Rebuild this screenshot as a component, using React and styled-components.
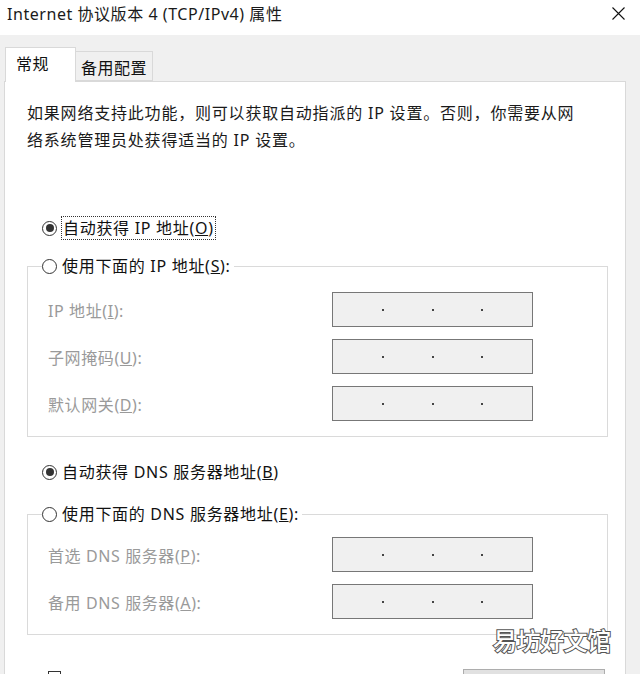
import React from "react";
import styled, { createGlobalStyle } from "styled-components";

const GlobalStyle = createGlobalStyle`
  html, body, #root {
    margin: 0;
    width: 640px;
    height: 674px;
    overflow: hidden;
  }
  body {
    background: #f0f0f0;
    font-family: "Noto Sans", "Noto Sans CJK SC", sans-serif;
    color: #1a1a1a;
  }
`;

const ipRows = [
  { label: "IP 地址", key: "I" },
  { label: "子网掩码", key: "U" },
  { label: "默认网关", key: "D" },
];

const dnsRows = [
  { label: "首选 DNS 服务器", key: "P" },
  { label: "备用 DNS 服务器", key: "A" },
];

const Radio = ({ checked }) => (
  <RadioCircle>{checked && <RadioDot />}</RadioCircle>
);

const IpBox = () => (
  <IpInput>
    <Octet />
    <Dot />
    <Octet />
    <Dot />
    <Octet />
    <Dot />
    <Octet />
  </IpInput>
);

const Fields = ({ rows, top }) => (
  <FieldGrid $top={top}>
    {rows.map((r) => (
      <React.Fragment key={r.key}>
        <FieldLabel>
          {r.label}(<u>{r.key}</u>):
        </FieldLabel>
        <IpBox />
      </React.Fragment>
    ))}
  </FieldGrid>
);

const App = () => {
  return (
    <Window>
      <GlobalStyle />
      <TitleBar>
        <Title>Internet 协议版本 4 (TCP/IPv4) 属性</Title>
        <CloseIcon viewBox="0 0 13 13">
          <path d="M0.5 0.5 L12.5 12.5 M12.5 0.5 L0.5 12.5" stroke="#111" strokeWidth="1.1" />
        </CloseIcon>
      </TitleBar>

      <Body>
        <Tabs>
          <Tab $active>常规</Tab>
          <Tab>备用配置</Tab>
        </Tabs>

        <Panel>
          <Intro>
            如果网络支持此功能，则可以获取自动指派的 IP 设置。否则，你需要从网
            <br />
            络系统管理员处获得适当的 IP 设置。
          </Intro>

          <RadioRow $top={62}>
            <Radio checked />
            <RadioText $focused>
              自动获得 IP 地址(<u>O</u>)
            </RadioText>
          </RadioRow>

          <Group $top={14}>
            <Legend>
              <RadioRow>
                <Radio />
                <RadioText>
                  使用下面的 IP 地址(<u>S</u>):
                </RadioText>
              </RadioRow>
            </Legend>
            <Fields rows={ipRows} top={14} />
          </Group>

          <RadioRow $top={23}>
            <Radio checked />
            <RadioText>
              自动获得 DNS 服务器地址(<u>B</u>)
            </RadioText>
          </RadioRow>

          <Group $top={18}>
            <Legend>
              <RadioRow>
                <Radio />
                <RadioText>
                  使用下面的 DNS 服务器地址(<u>E</u>):
                </RadioText>
              </RadioRow>
            </Legend>
            <Fields rows={dnsRows} top={11} />
          </Group>

          <BottomRow>
            <CheckLabel>
              <CheckBox />
              退出时验证设置(<u>L</u>)
            </CheckLabel>
            <Button>高级(<u>V</u>)...</Button>
          </BottomRow>
        </Panel>
      </Body>

      <Watermark>易坊好文馆</Watermark>
    </Window>
  );
};

export default App;

const Window = styled.div`
  position: relative;
  width: 640px;
  height: 674px;
  overflow: hidden;
  background: #f0f0f0;
`;

const TitleBar = styled.div`
  display: flex;
  justify-content: space-between;
  align-items: flex-start;
  height: 35px;
  padding: 0 15px 0 7px;
  box-sizing: border-box;
  background: #ffffff;
`;

const Title = styled.div`
  padding-top: 3px;
  font-size: 16px;
  line-height: 22px;
  letter-spacing: 0.55px;
  color: #1a1a1a;
  white-space: nowrap;
`;

const CloseIcon = styled.svg`
  width: 13px;
  height: 13px;
  margin-top: 7px;
`;

const Body = styled.div`
  padding: 12px 0 0 4px;
`;

const Tabs = styled.div`
  display: flex;
  align-items: flex-end;
  padding-left: 1px;
`;

const Tab = styled.div`
  position: relative;
  box-sizing: border-box;
  width: ${(p) => (p.$active ? "71px" : "77px")};
  height: ${(p) => (p.$active ? "35px" : "30px")};
  margin-bottom: ${(p) => (p.$active ? "-1px" : "0")};
  padding: 5px 0 0 ${(p) => (p.$active ? "10px" : "5px")};
  font-size: 16px;
  line-height: 22px;
  letter-spacing: 0.5px;
  background: ${(p) => (p.$active ? "#ffffff" : "#f0f0f0")};
  border: 1px solid #d9d9d9;
  border-bottom: ${(p) => (p.$active ? "none" : "1px solid #d9d9d9")};
  border-left: ${(p) => (p.$active ? "1px solid #d9d9d9" : "none")};
  z-index: ${(p) => (p.$active ? 2 : 1)};
  color: #111;
`;

const Panel = styled.div`
  box-sizing: border-box;
  width: 622px;
  height: 700px;
  padding: 18px 17px 0 22px;
  background: #ffffff;
  border: 1px solid #d9d9d9;
`;

const Intro = styled.p`
  margin: 0;
  font-size: 16px;
  line-height: 27px;
  letter-spacing: 0.8px;
  white-space: nowrap;
  color: #1a1a1a;
`;

const RadioRow = styled.div`
  display: flex;
  align-items: center;
  height: 24px;
  margin-top: ${(p) => p.$top || 0}px;
  padding-left: ${(p) => (p.$top ? "15px" : "0")};
`;

const RadioCircle = styled.span`
  display: flex;
  align-items: center;
  justify-content: center;
  box-sizing: border-box;
  width: 15px;
  height: 15px;
  border: 1px solid #333;
  border-radius: 50%;
  background: #fff;
  flex-shrink: 0;
`;

const RadioDot = styled.span`
  width: 8px;
  height: 8px;
  border-radius: 50%;
  background: #333;
`;

const RadioText = styled.span`
  margin-left: ${(p) => (p.$focused ? "4px" : "5px")};
  padding: 0 ${(p) => (p.$focused ? "1px" : "0")};
  font-size: 16px;
  line-height: 22px;
  letter-spacing: 0.7px;
  color: #111;
  white-space: nowrap;
  border: ${(p) => (p.$focused ? "1px dotted #333" : "none")};
`;

const Group = styled.fieldset`
  margin: ${(p) => p.$top}px 0 0 0;
  padding: 0 0 15px 20px;
  border: 1px solid #dadada;
  min-inline-size: 0;
`;

const Legend = styled.legend`
  margin-left: -6px;
  padding: 0 3px 0 0;
`;

const FieldGrid = styled.div`
  display: grid;
  grid-template-columns: 284px 201px;
  grid-auto-rows: 35px;
  row-gap: 12px;
  align-items: center;
  padding-top: ${(p) => p.$top}px;
`;

const FieldLabel = styled.span`
  font-size: 16px;
  letter-spacing: 0.6px;
  color: #9a9a9a;
  white-space: nowrap;
`;

const IpInput = styled.div`
  display: flex;
  align-items: center;
  box-sizing: border-box;
  height: 35px;
  padding: 0 2px;
  background: #f0f0f0;
  border: 1px solid #777;
`;

const Octet = styled.span`
  flex: 1;
`;

const Dot = styled.span`
  width: 2px;
  height: 2px;
  background: #444;
`;

const BottomRow = styled.div`
  display: flex;
  justify-content: space-between;
  align-items: flex-start;
  margin-top: 34px;
  padding-left: 21px;
  padding-right: 3px;
`;

const CheckLabel = styled.span`
  display: flex;
  align-items: flex-start;
  gap: 6px;
  margin-top: 2px;
  font-size: 16px;
  line-height: 22px;
  color: #111;
`;

const CheckBox = styled.span`
  box-sizing: border-box;
  width: 13px;
  height: 13px;
  border: 1px solid #333;
  background: #fff;
`;

const Button = styled.div`
  box-sizing: border-box;
  width: 142px;
  height: 30px;
  display: flex;
  align-items: center;
  justify-content: center;
  font-size: 15px;
  background: #e1e1e1;
  border: 1px solid #adadad;
`;

const Watermark = styled.div`
  position: absolute;
  left: 493px;
  top: 624px;
  font-family: "Noto Sans CJK SC", sans-serif;
  font-size: 24px;
  font-weight: 500;
  line-height: 32px;
  color: #ffffff;
  -webkit-text-stroke: 2px #555;
  paint-order: stroke fill;
  letter-spacing: -0.5px;
`;
